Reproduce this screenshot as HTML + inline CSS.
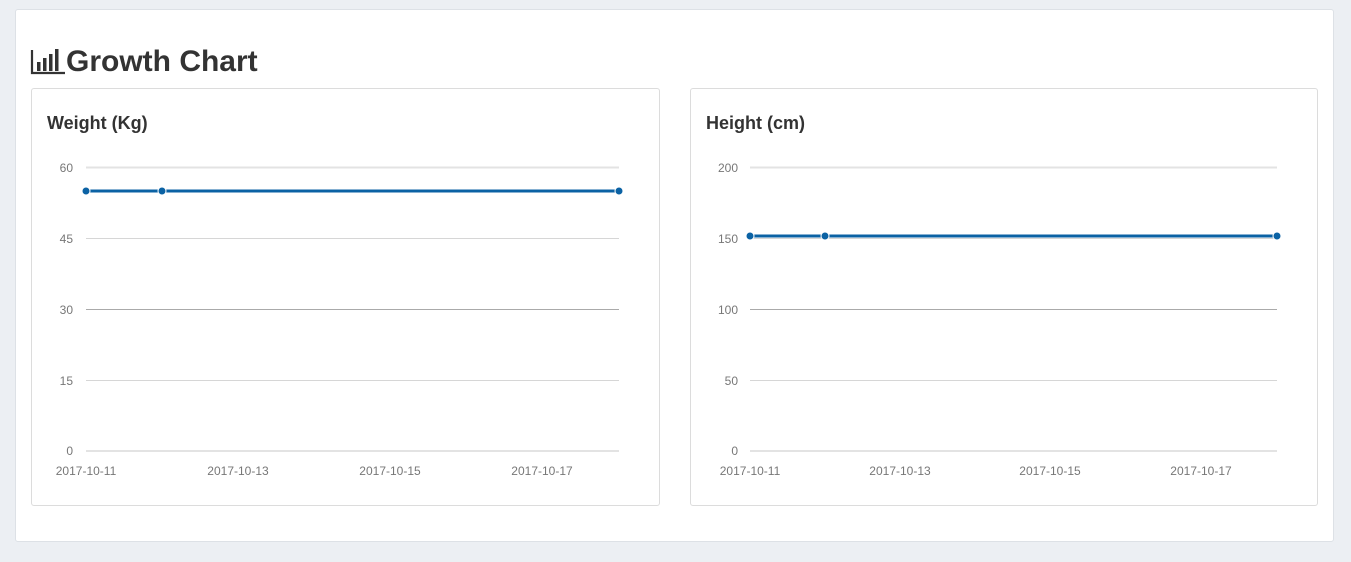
<!DOCTYPE html>
<html><head><style>
body{margin:0;background:#eceff3;width:1351px;height:562px;font-family:"Liberation Sans",sans-serif;position:relative;overflow:hidden}
.panel{position:absolute;left:15px;top:9px;width:1319px;height:533px;background:#fff;border:1px solid #dde1e6;border-radius:3px;box-sizing:border-box}
h1{position:absolute;left:66px;top:45px;margin:0;font-size:30px;font-weight:bold;color:#333}
.card{position:absolute;top:88px;width:629px;height:418px;border:1px solid #dcdcdc;border-radius:3px;box-sizing:border-box;background:#fff}
.card h2{position:absolute;left:15px;top:24px;margin:0;font-size:18px;font-weight:bold;color:#333}
svg{position:absolute;left:0;top:0}
svg text{font-family:"Liberation Sans",sans-serif;font-size:12px;fill:#777}
</style></head><body>
<div class="panel"></div>
<svg width="40" height="40" style="left:30px;top:46px" viewBox="0 0 40 40">
<path d="M2 4V27H35" stroke="#333" stroke-width="2.2" fill="none"/>
<rect x="7" y="16" width="3.5" height="9" fill="#333"/>
<rect x="13" y="12" width="3.5" height="13" fill="#333"/>
<rect x="19" y="8" width="3.5" height="17" fill="#333"/>
<rect x="25" y="3" width="3.5" height="22" fill="#333"/>
</svg>
<h1>Growth Chart</h1>

<div class="card" style="left:31px"><h2>Weight (Kg)</h2></div>
<div class="card" style="left:690px;width:628px"><h2>Height (cm)</h2></div>

<svg width="1351" height="562">
<g stroke-width="1">
<line x1="86" x2="619" y1="167.5" y2="167.5" stroke="#e3e3e3" stroke-width="2"/>
<line x1="86" x2="619" y1="238.5" y2="238.5" stroke="#d6d6d6"/>
<line x1="86" x2="619" y1="309.5" y2="309.5" stroke="#aaa"/>
<line x1="86" x2="619" y1="380.5" y2="380.5" stroke="#d6d6d6"/>
<line x1="86" x2="619" y1="451" y2="451" stroke="#e3e3e3" stroke-width="2"/>
<line x1="750" x2="1277" y1="167.5" y2="167.5" stroke="#e3e3e3" stroke-width="2"/>
<line x1="750" x2="1277" y1="238.5" y2="238.5" stroke="#d6d6d6"/>
<line x1="750" x2="1277" y1="309.5" y2="309.5" stroke="#aaa"/>
<line x1="750" x2="1277" y1="380.5" y2="380.5" stroke="#d6d6d6"/>
<line x1="750" x2="1277" y1="451" y2="451" stroke="#e3e3e3" stroke-width="2"/>
</g>
<g text-anchor="end">
<text x="73" y="172">60</text><text x="73" y="243">45</text><text x="73" y="314">30</text><text x="73" y="385">15</text><text x="73" y="455">0</text>
<text x="738" y="172">200</text><text x="738" y="243">150</text><text x="738" y="314">100</text><text x="738" y="385">50</text><text x="738" y="455">0</text>
</g>
<g text-anchor="middle">
<text x="86" y="475">2017-10-11</text><text x="238" y="475">2017-10-13</text><text x="390" y="475">2017-10-15</text><text x="542" y="475">2017-10-17</text>
<text x="750" y="475">2017-10-11</text><text x="900" y="475">2017-10-13</text><text x="1050" y="475">2017-10-15</text><text x="1201" y="475">2017-10-17</text>
</g>
<line x1="86" x2="619" y1="191" y2="191" stroke="#0b62a4" stroke-width="3"/>
<line x1="750" x2="1277" y1="236" y2="236" stroke="#0b62a4" stroke-width="3"/>
<g fill="#0b62a4" stroke="#fff" stroke-width="1">
<circle cx="86" cy="191" r="4"/><circle cx="162" cy="191" r="4"/><circle cx="619" cy="191" r="4"/>
<circle cx="750" cy="236" r="4"/><circle cx="825" cy="236" r="4"/><circle cx="1277" cy="236" r="4"/>
</g>
</svg>
</body></html>
